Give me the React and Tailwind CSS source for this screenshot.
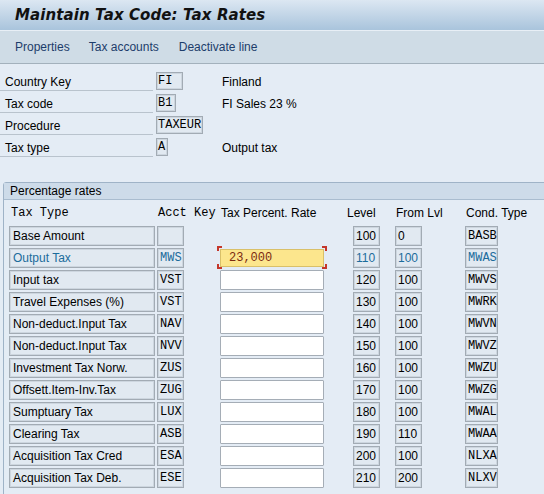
import React from "react";

const SANS = { fontFamily: '"Liberation Sans", Arial, sans-serif' };
const MONO = { fontFamily: '"Liberation Mono", "Courier New", monospace' };

const headerFields = [
  { label: "Country Key", value: "FI", w: "w-[27px]", desc: "Finland" },
  { label: "Tax code", value: "B1", w: "w-[20px]", desc: "FI Sales 23 %" },
  { label: "Procedure", value: "TAXEUR", w: "w-[47px]", desc: "" },
  { label: "Tax type", value: "A", w: "w-[12px]", desc: "Output tax" },
];

const rows = [
  { name: "Base Amount", key: "", rate: null, level: "100", from: "0", cond: "BASB" },
  { name: "Output Tax", key: "MWS", rate: "23,000", level: "110", from: "100", cond: "MWAS", active: true },
  { name: "Input tax", key: "VST", rate: "", level: "120", from: "100", cond: "MWVS" },
  { name: "Travel Expenses (%)", key: "VST", rate: "", level: "130", from: "100", cond: "MWRK" },
  { name: "Non-deduct.Input Tax", key: "NAV", rate: "", level: "140", from: "100", cond: "MWVN" },
  { name: "Non-deduct.Input Tax", key: "NVV", rate: "", level: "150", from: "100", cond: "MWVZ" },
  { name: "Investment Tax Norw.", key: "ZUS", rate: "", level: "160", from: "100", cond: "MWZU" },
  { name: "Offsett.Item-Inv.Tax", key: "ZUG", rate: "", level: "170", from: "100", cond: "MWZG" },
  { name: "Sumptuary Tax", key: "LUX", rate: "", level: "180", from: "100", cond: "MWAL" },
  { name: "Clearing Tax", key: "ASB", rate: "", level: "190", from: "110", cond: "MWAA" },
  { name: "Acquisition Tax Cred", key: "ESA", rate: "", level: "200", from: "100", cond: "NLXA" },
  { name: "Acquisition Tax Deb.", key: "ESE", rate: "", level: "210", from: "200", cond: "NLXV" },
];

const roBox =
  "h-[20px] flex items-center bg-[#e1e9f1] border border-[#a2abb4] shadow-[inset_0_0_0_1px_#cdd6df] text-[12px] leading-none whitespace-nowrap overflow-hidden";

function Corner({ pos }) {
  const map = {
    tl: "top-0 left-0 border-t-2 border-l-2",
    tr: "top-0 right-0 border-t-2 border-r-2",
    bl: "bottom-0 left-0 border-b-2 border-l-2",
    br: "bottom-0 right-0 border-b-2 border-r-2",
  };
  return <span className={`absolute w-[5px] h-[5px] border-[#c4372b] ${map[pos]}`} />;
}

export default function App() {
  return (
    <div className="w-[544px] h-[494px] overflow-hidden bg-[#e4ecf5] text-black" style={SANS}>
      {/* Title bar */}
      <div className="h-[30px] flex items-center pl-[15px] bg-gradient-to-b from-[#dce7f2] to-[#a9c4dc]">
        <span
          className="text-[15px] font-bold italic text-[#111] tracking-[0.1px]"
          style={{ fontFamily: '"DejaVu Sans", Verdana, sans-serif' }}
        >
          Maintain Tax Code: Tax Rates
        </span>
      </div>
      <div className="h-px bg-[#e8eff6]" />
      {/* Toolbar */}
      <div className="h-[33px] flex items-center pl-[15px] bg-[#cfdce6] border-b border-[#a3b1bc] text-[12px] text-[#1d3d6b]">
        <span>Properties</span>
        <span className="ml-[19px]">Tax accounts</span>
        <span className="ml-[20px]">Deactivate line</span>
      </div>

      {/* Header fields */}
      <div className="pt-[5px] flex flex-col">
        {headerFields.map((f) => (
          <div key={f.label} className="h-[22px] flex items-end">
            <div className="w-[153px] h-[22px] flex items-center pl-[5px] pt-[4px] border-b border-[#b9c3cd] text-[12px]">
              {f.label}
            </div>
            <div
              className={`${f.w} ml-[3px] h-[18px] mb-px flex items-center pl-[1px] bg-[#e1e9f1] border border-[#a2abb4] shadow-[inset_0_0_0_1px_#cdd6df] text-[12px] leading-none whitespace-nowrap`}
              style={MONO}
            >
              {f.value}
            </div>
            <div className="ml-auto w-[322px] h-[22px] flex items-center pt-[3px] text-[12px]">{f.desc}</div>
          </div>
        ))}
      </div>

      {/* Group box */}
      <div className="mt-[25px] ml-[3px] w-[560px] h-[320px] border border-[#9fb3c7] rounded-tl-[3px]">
        <div className="h-[17px] flex items-center pl-[6px] bg-[#cddbe9] border-b border-[#a9bccf] text-[12px]">
          Percentage rates
        </div>
        {/* Column headers */}
        <div className="h-[26px] flex items-center pl-[7px] text-[12px] whitespace-nowrap">
          <span className="w-[147px]" style={MONO}>Tax Type</span>
          <span className="w-[63px]" style={MONO}>Acct Key</span>
          <span className="w-[126px]">Tax Percent. Rate</span>
          <span className="w-[49px]">Level</span>
          <span className="w-[70px]">From Lvl</span>
          <span>Cond. Type</span>
        </div>
        {/* Rows */}
        <div className="flex flex-col">
          {rows.map((r, i) => {
            const c = r.active ? "text-[#1b6c9c]" : "text-black";
            return (
              <div key={i} className="h-[22px] flex items-start pl-[5px]">
                <div className={`w-[146px] pl-[3px] ${roBox} ${c}`}>{r.name}</div>
                <div className={`w-[27px] ml-[2px] pl-[2px] ${roBox} ${c}`} style={MONO}>
                  {r.key}
                </div>
                <div className="w-[104px] ml-[36px] h-[20px]">
                  {r.rate === null ? null : r.active ? (
                    <div className="relative w-[110px] h-[23px] -ml-[3px] -mt-[2px]">
                      <Corner pos="tl" />
                      <Corner pos="tr" />
                      <Corner pos="bl" />
                      <Corner pos="br" />
                      <div
                        className="absolute left-[3px] top-[3px] w-[104px] h-[18px] flex items-center pl-[8px] bg-[#fce68d] border border-[#d9c069] text-[12px] text-[#7b2a10] leading-none"
                        style={MONO}
                      >
                        {r.rate}
                      </div>
                    </div>
                  ) : (
                    <div className="w-[104px] h-[20px] bg-white border border-[#a5adb6] rounded-[1px]" />
                  )}
                </div>
                <div className={`w-[27px] ml-[29px] pl-[2px] ${roBox} ${c}`}>{r.level}</div>
                <div className={`w-[27px] ml-[15px] pl-[2px] ${roBox} ${c}`}>{r.from}</div>
                <div className={`w-[33px] ml-[43px] pl-[2px] ${roBox} ${c}`} style={MONO}>
                  {r.cond}
                </div>
              </div>
            );
          })}
        </div>
      </div>
    </div>
  );
}
